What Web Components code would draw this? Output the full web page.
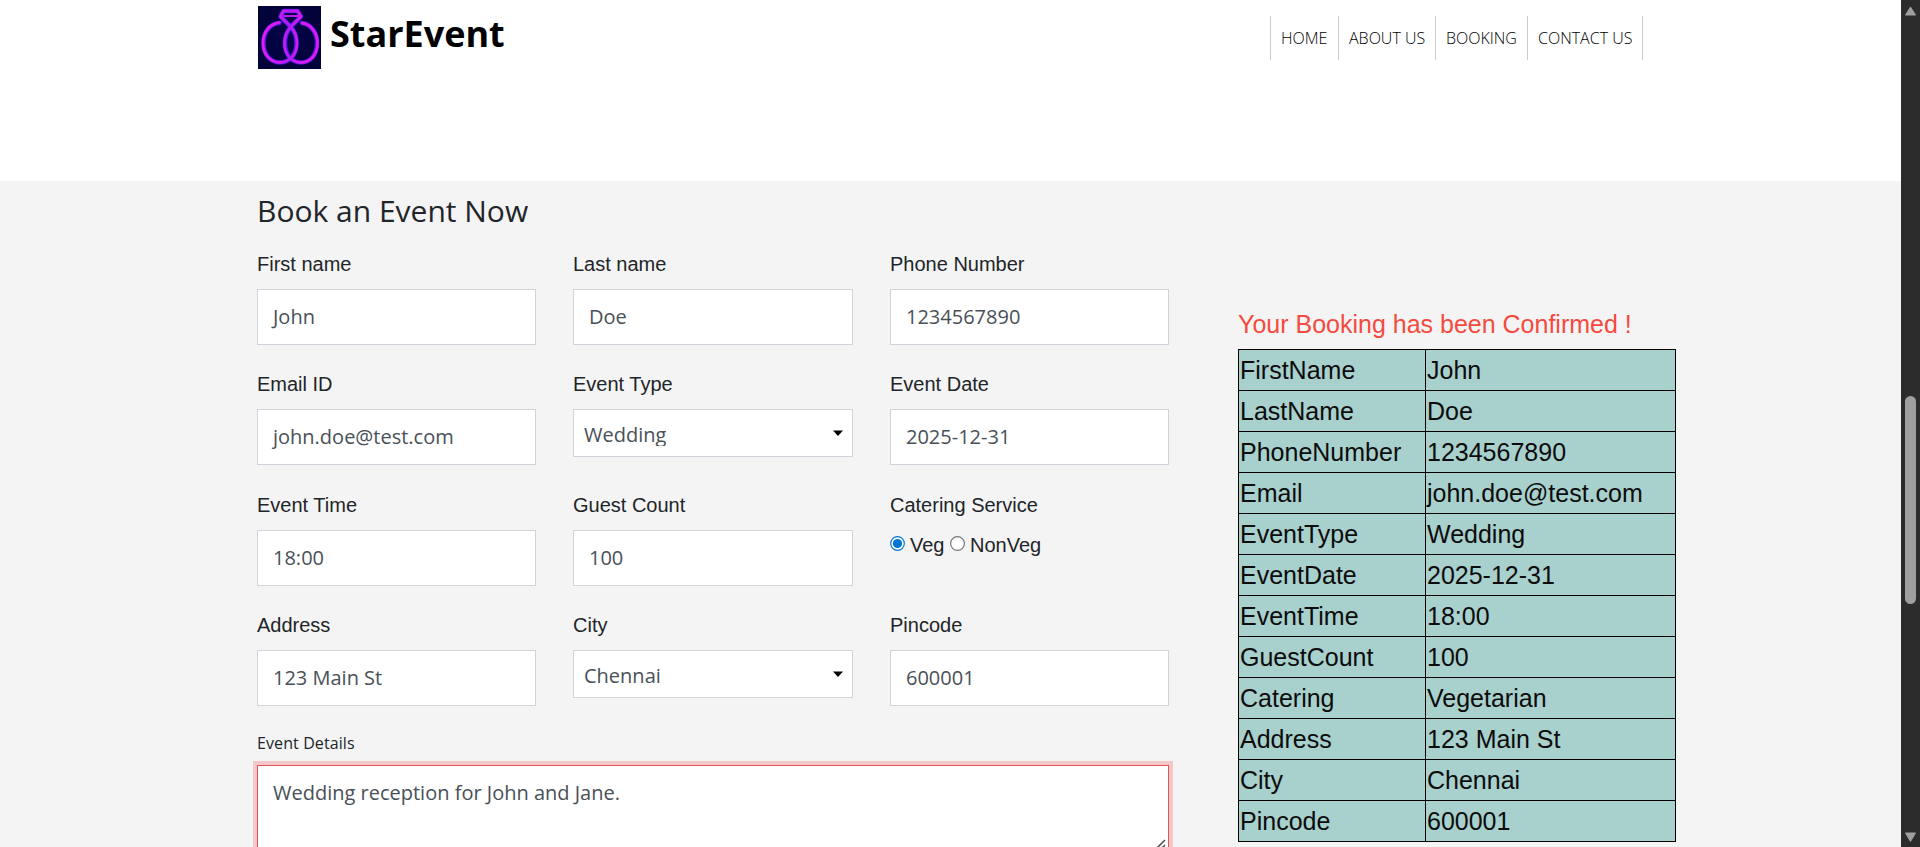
<!DOCTYPE html>
<html lang="en">
<head>
<meta charset="utf-8">
<title>StarEvent</title>
<style>
html,body{margin:0;height:847px;overflow:hidden;background:#fff}
body{font-family:"Open Sans",sans-serif;color:#212529}
</style>
</head>
<body>
<event-page></event-page>
<script>
function define(name, html) {
  const t = document.createElement('template');
  t.innerHTML = html;
  customElements.define(name, class extends HTMLElement {
    constructor() {
      super();
      this.attachShadow({mode: 'open'}).append(t.content.cloneNode(true));
    }
  });
}

define('rings-logo', `
<style>:host{display:block;width:63px;height:63px}svg{display:block}</style>
<svg width="63" height="63" viewBox="0 0 63 63" fill="none" stroke-linecap="round" stroke-linejoin="round">
  <defs>
    <radialGradient id="bg"><stop offset="0" stop-color="#06034e"/><stop offset="1" stop-color="#010339"/></radialGradient>
    <linearGradient id="neon" x1="0" y1="0" x2="63" y2="0" gradientUnits="userSpaceOnUse">
      <stop offset="0" stop-color="#ee1bf0"/><stop offset=".38" stop-color="#c81cf4"/><stop offset=".5" stop-color="#b01cf5"/><stop offset=".65" stop-color="#d41cf0"/><stop offset="1" stop-color="#e01bf2"/>
    </linearGradient>
  </defs>
  <rect width="63" height="63" fill="url(#bg)"/>
  <path stroke="#5014dc" stroke-width="4.600" d="M21.500 17C11 18 5.500 27 5.500 37C5.500 48 12 56.500 22 56.500C32 56.500 38.500 48 38.500 37C38.500 31 36.500 25 32.500 20.500L22.500 10.500L25.500 5H39.500L43 10.500L33 20.500C29 25 27 31 27 37C27 48 33 56.500 43 56.500C53 56.500 59 48 59 37C59 27 53 18 44 17"/>
  <g stroke="url(#neon)" stroke-width="2.800">
    <path d="M21.500 16.500C10.500 18 5 27 5 37C5 48 12 56.500 22 56.500C32 56.500 39 48 39 37C39 31 36.500 25 32.500 20.500L22.500 10.500L25.500 5H39.500L43 10.500L33 20.500C29 25 26.500 31 26.500 37C26.500 48 33 56.500 43 56.500C53 56.500 59.500 48 59.500 37C59.500 27 53 18 44 17"/>
    <path d="M26 10H40" stroke-width="2"/>
  </g>
</svg>`);

define('nav-item', `
<style>:host{display:block;box-sizing:border-box;height:44px;padding:0 11px 0 10px;border-right:1px solid #ccc;font-weight:300;font-size:16px;line-height:44px;color:#000;white-space:nowrap}</style>
<slot></slot>`);

define('site-header', `
<style>
:host{display:flex;box-sizing:border-box;height:181px;padding:6px 258px 0 258px;justify-content:space-between;align-items:flex-start;background:#fff}
.brand{display:flex;gap:9px}
h1{margin:0;font-size:36px;line-height:49px;font-weight:700;color:#000;padding-top:3px}
nav{display:flex;margin-top:10px;border-left:1px solid #ccc}
</style>
<div class="brand"><rings-logo></rings-logo><h1>StarEvent</h1></div>
<nav><nav-item style="width:68px">HOME</nav-item><nav-item style="width:97px">ABOUT US</nav-item><nav-item style="width:92px">BOOKING</nav-item><nav-item style="width:115px">CONTACT US</nav-item></nav>`);

define('form-field', `
<style>
:host{display:block;min-width:0}
label{display:block;font:20px/30px "Liberation Sans",Arial,sans-serif;margin-bottom:10px}
</style>
<label><slot name="label"></slot></label><slot></slot>`);

define('text-box', `
<style>:host{display:block;box-sizing:border-box;height:56px;border:1px solid #ced4da;background:#fff;padding:0 15px;font-size:20px;line-height:54px;color:#495057}</style>
<slot></slot>`);

define('select-box', `
<style>
:host{display:flex;box-sizing:border-box;height:48px;border:1px solid #ced4da;background:#fff;padding:9px 9px 0 10px;justify-content:space-between;font-size:20px;color:#495057}
span{height:27px;line-height:32px;overflow:hidden}
svg{margin-top:11px}
</style>
<span><slot></slot></span><svg width="10" height="6"><path d="M0 .5H10L5 6Z" fill="#000"/></svg>`);

define('radio-group', `
<style>
:host{display:flex;align-items:center;height:30px;font:20px/30px "Liberation Sans",Arial,sans-serif}
svg{margin:-4px 5px 0 0}
span{margin-right:5.500px}
span:last-child{margin:0}
</style>
<svg width="15" height="15"><circle cx="7.500" cy="7.500" r="6.800" fill="#fff" stroke="#0075d7" stroke-width="1.200"/><circle cx="7.500" cy="7.500" r="4.600" fill="#0075d7"/></svg><span>Veg</span>
<svg width="15" height="15"><circle cx="7.500" cy="7.500" r="6.900" fill="#fff" stroke="#767676" stroke-width="1.200"/></svg><span>NonVeg</span>`);

define('booking-form', `
<style>
:host{display:block;width:912px}
h2{margin:0;font-size:30px;line-height:36px;font-weight:400;padding-top:12px}
.grid{display:grid;grid-template-columns:279px 279px 279px;column-gap:37.500px;grid-template-columns:278.500px 279.500px 279px;grid-template-rows:120px 121px 120px 121px;padding-top:20px}
.details{font-size:16px;line-height:24px;letter-spacing:.1px}
.area{box-sizing:border-box;height:120px;margin-top:10px;border:1px solid #e9515b;box-shadow:0 0 0 4px #f3c8cb;background:#fff;padding:12px 15px;font-size:20px;line-height:30px;color:#495057;position:relative}
.area svg{position:absolute;right:2px;top:73px}
</style>
<h2>Book an Event Now</h2>
<div class="grid">
<form-field><span slot="label">First name</span><text-box>John</text-box></form-field>
<form-field><span slot="label">Last name</span><text-box>Doe</text-box></form-field>
<form-field><span slot="label">Phone Number</span><text-box>1234567890</text-box></form-field>
<form-field><span slot="label">Email ID</span><text-box>john.doe@test.com</text-box></form-field>
<form-field><span slot="label">Event Type</span><select-box>Wedding</select-box></form-field>
<form-field><span slot="label">Event Date</span><text-box>2025-12-31</text-box></form-field>
<form-field><span slot="label">Event Time</span><text-box>18:00</text-box></form-field>
<form-field><span slot="label">Guest Count</span><text-box>100</text-box></form-field>
<form-field><span slot="label">Catering Service</span><radio-group></radio-group></form-field>
<form-field><span slot="label">Address</span><text-box>123 Main St</text-box></form-field>
<form-field><span slot="label">City</span><select-box>Chennai</select-box></form-field>
<form-field><span slot="label">Pincode</span><text-box>600001</text-box></form-field>
</div>
<div class="details">Event Details</div>
<div class="area">Wedding reception for John and Jane.<svg width="10" height="10" stroke="#4a4a4a" stroke-width="1.500"><path d="M.5 9.500L9 1M5.500 9.500L9 6"/></svg></div>`);

define('booking-row', `
<style>
:host{display:grid;grid-template-columns:186px 249px;column-gap:1px;background:#000}
div{background:#a8d0cd;height:40px;line-height:41px;padding-left:1px;box-sizing:border-box;white-space:nowrap}
</style>
<div><slot name="key"></slot></div><div><slot></slot></div>`);

define('booking-summary', `
<style>
:host{display:block;width:438px;font:25px/30px "Liberation Sans",Arial,sans-serif;padding-top:128px}
h3{margin:0 0 10px;font-weight:400;font-size:25px;line-height:30px;color:#f44a40}
.table{display:grid;row-gap:1px;background:#000;border:1px solid #000;color:#0c0c0c}
</style>
<h3>Your Booking has been Confirmed !</h3>
<div class="table">
${[['FirstName','John'],['LastName','Doe'],['PhoneNumber','1234567890'],['Email','john.doe@test.com'],['EventType','Wedding'],['EventDate','2025-12-31'],['EventTime','18:00'],['GuestCount','100'],['Catering','Vegetarian'],['Address','123 Main St'],['City','Chennai'],['Pincode','600001']].map(([k,v])=>`<booking-row><span slot="key">${k}</span>${v}</booking-row>`).join('')}
</div>`);

define('page-scrollbar', `
<style>
:host{display:flex;flex-direction:column;align-items:center;width:19px;height:847px;background:#2c2c2c}
.thumb{width:11px;height:208px;border-radius:5.500px;background:#9f9f9f;margin:380px 0 228px}
svg{display:block}
</style>
<svg width="13" height="16"><path d="M6.500 7L11.500 15H1.500Z" fill="#9f9f9f" stroke="#9f9f9f" stroke-linejoin="round"/></svg>
<div class="thumb"></div>
<svg width="13" height="11"><path d="M6.500 9.500L11.500 1H1.500Z" fill="#9f9f9f" stroke="#9f9f9f" stroke-linejoin="round"/></svg>`);

define('event-page', `
<style>
:host{display:flex;height:847px;overflow:hidden}
.content{width:1901px;height:847px;overflow:hidden}
main{display:flex;gap:69px;padding-left:257px;height:666px;background:#f4f4f4}
booking-form,booking-summary{flex:none}
</style>
<div class="content"><site-header></site-header><main><booking-form></booking-form><booking-summary></booking-summary></main></div>
<page-scrollbar></page-scrollbar>`);
</script>
</body>
</html>
